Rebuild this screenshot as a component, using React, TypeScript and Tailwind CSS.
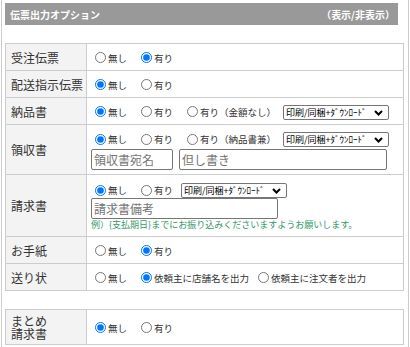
import React from "react";

const Radio = ({
  name,
  checked,
  label,
  className = "",
}: {
  name: string;
  checked?: boolean;
  label: string;
  className?: string;
}) => (
  <label className={"flex items-center shrink-0 " + className}>
    <input
      type="radio"
      name={name}
      defaultChecked={checked}
      className="m-0 w-[11px] h-[11px] accent-[#0075ff]"
    />
    <span className="ml-[2px] text-[9.5px] leading-none text-[#333] translate-y-[1px] whitespace-nowrap">
      {label}
    </span>
  </label>
);

const Select = ({ className = "" }: { className?: string }) => (
  <div className={"relative w-[106px] h-[15px] shrink-0 " + className}>
    <select className="block appearance-none w-[106px] h-[15px] m-0 py-0 border border-[#767676] rounded-[2px] bg-white text-[9px] leading-[13px] pl-[2px] text-black outline-none">
      <option>印刷/同梱+ﾀﾞｳﾝﾛｰﾄﾞ</option>
    </select>
    <svg
      className="absolute right-[6px] top-[5px] w-[9px] h-[6px] pointer-events-none"
      viewBox="0 0 9 6"
    >
      <polyline
        points="1,1 4.5,4.5 8,1"
        fill="none"
        stroke="#000"
        strokeWidth="2"
      />
    </svg>
  </div>
);

const Row = ({
  label,
  h,
  children,
  contentClass = "",
}: {
  label: React.ReactNode;
  h: string;
  children: React.ReactNode;
  contentClass?: string;
}) => (
  <div className={"flex border-b border-[#ccc] " + h}>
    <div className="w-[81px] shrink-0 border-r border-[#ccc] bg-[#f3f3f3] flex items-center pl-[5px] text-[12px] leading-[13px] text-[#333]">
      {label}
    </div>
    <div className={"flex-1 border-r border-[#ccc] pl-[4px] " + contentClass}>
      {children}
    </div>
  </div>
);

export default function App() {
  return (
    <div className="font-['Noto_Sans_CJK_JP',sans-serif] bg-white min-h-[347px] w-[410px]">
      <div className="ml-[1px] w-[408px] min-h-[347px] border-x border-[#ccc] pt-[3px] pl-[3px]">
        <div className="w-[393px] h-[22px] bg-[#999] flex items-center justify-between pl-[5px] pr-[3px] text-white font-bold text-[10px]">
          <span>伝票出力オプション</span>
          <span>（表示/非表示）</span>
        </div>

        <div className="mt-[18px] w-[399px] border-l border-t border-[#ccc]">
          <Row label="受注伝票" h="h-[27px]" contentClass="flex items-center pl-[8px] pt-[1px]">
            <Radio name="a" label="無し" />
            <Radio name="a" label="有り" checked className="ml-[14px]" />
          </Row>
          <Row label="配送指示伝票" h="h-[27px]" contentClass="flex items-center pl-[8px] pt-[1px]">
            <Radio name="b" label="無し" checked />
            <Radio name="b" label="有り" className="ml-[14px]" />
          </Row>
          <Row label="納品書" h="h-[27px]" contentClass="flex items-center pl-[8px] pt-[1px]">
            <Radio name="c" label="無し" checked />
            <Radio name="c" label="有り" className="ml-[14px]" />
            <Radio name="c" label="有り（金額なし）" className="ml-[14px]" />
            <Select className="ml-[7px] mt-[2px]" />
          </Row>
          <Row label="領収書" h="h-[50px]" contentClass="pt-[6px]">
            <div className="flex items-center h-[16px] pl-[4px]">
              <Radio name="d" label="無し" checked />
              <Radio name="d" label="有り" className="ml-[14px]" />
              <Radio name="d" label="有り（納品書兼）" className="ml-[14px]" />
              <Select className="ml-[7px]" />
            </div>
            <div className="flex mt-[2px]">
              <input
                placeholder="領収書宛名"
                className="w-[82px] h-[21px] border border-[#767676] rounded-[2px] px-[2px] text-[12px] placeholder:text-[#757575] outline-none"
              />
              <input
                placeholder="但し書き"
                className="ml-[6px] w-[208px] h-[21px] border border-[#767676] rounded-[2px] px-[2px] text-[12px] placeholder:text-[#757575] outline-none"
              />
            </div>
          </Row>
          <Row label="請求書" h="h-[62px]" contentClass="pt-[7px]">
            <div className="flex items-center h-[16px] pl-[4px]">
              <Radio name="e" label="無し" checked />
              <Radio name="e" label="有り" className="ml-[14px]" />
              <Select className="ml-[8px]" />
            </div>
            <input
              placeholder="請求書備考"
              className="block w-[187px] h-[21px] border border-[#767676] rounded-[2px] px-[2px] text-[12px] placeholder:text-[#757575] outline-none"
            />
            <div className="text-[9px] leading-[12px] text-[#33996b] whitespace-nowrap">
              例）{"{"}支払期日{"}"}までにお振り込みくださいますようお願いします。
            </div>
          </Row>
          <Row label="お手紙" h="h-[27px]" contentClass="flex items-center pl-[8px] pt-[1px]">
            <Radio name="f" label="無し" />
            <Radio name="f" label="有り" checked className="ml-[14px]" />
          </Row>
          <Row label="送り状" h="h-[27px]" contentClass="flex items-center pl-[8px] pt-[1px]">
            <Radio name="g" label="無し" />
            <Radio name="g" label="依頼主に店舗名を出力" checked className="ml-[14px]" />
            <Radio name="g" label="依頼主に注文者を出力" className="ml-[9px]" />
          </Row>
        </div>

        <div className="mt-[18px] w-[399px] border-l border-t border-[#ccc]">
          <Row
            label={
              <span>
                まとめ
                <br />
                請求書
              </span>
            }
            h="h-[35px]"
            contentClass="flex items-center pl-[8px] pt-[1px]"
          >
            <Radio name="h" label="無し" checked />
            <Radio name="h" label="有り" className="ml-[14px]" />
          </Row>
        </div>
      </div>
    </div>
  );
}
